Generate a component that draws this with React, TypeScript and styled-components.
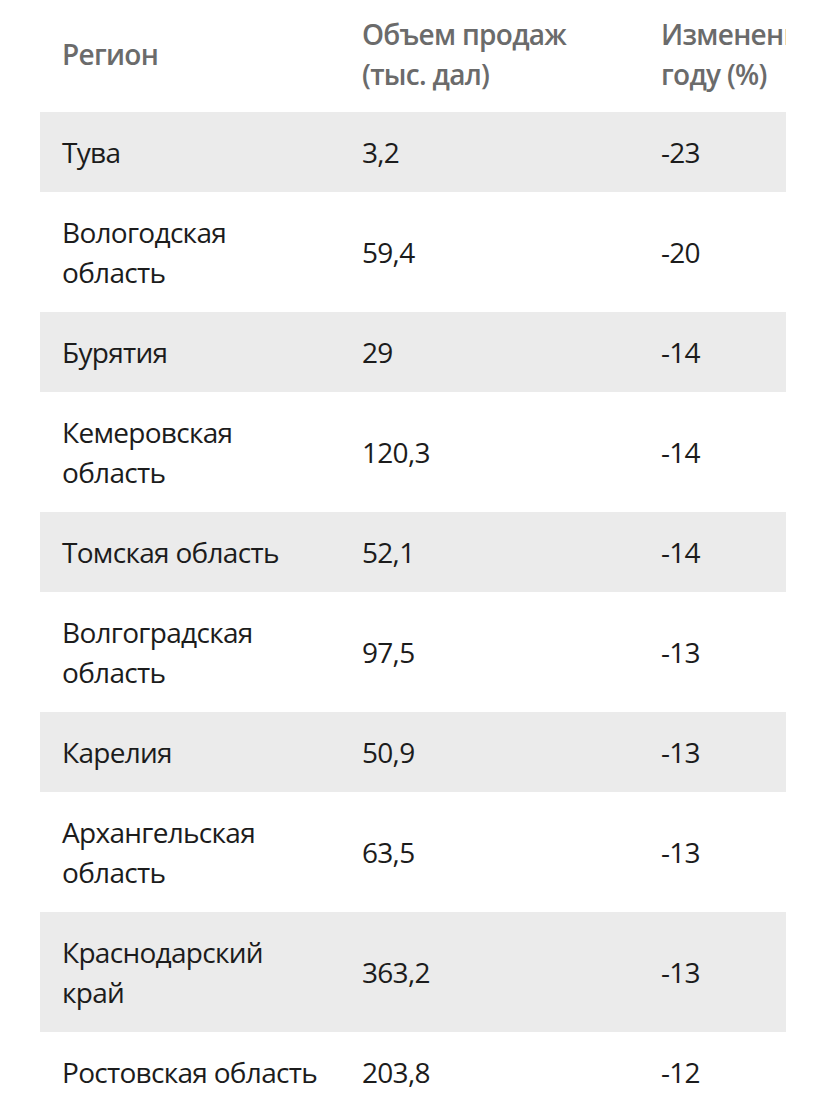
import React from 'react'
import styled, { createGlobalStyle } from 'styled-components'

const GlobalStyle = createGlobalStyle`
    body {
        margin: 0;
        background: #ffffff;
        font-family: 'Open Sans', 'Noto Sans', sans-serif;
    }
`

const Scroller = styled.div`
    width: 746px;
    margin-left: 40px;
    overflow: hidden;
`

const Table = styled.table`
    border-collapse: collapse;
    table-layout: fixed;
    width: 980px;
    font-size: 28px;
    line-height: 40px;
    letter-spacing: -0.7px;
`

const HeadCell = styled.th<{ $w: number }>`
    width: ${(p) => p.$w}px;
    padding: 14px 18px 18px 22px;
    text-align: left;
    vertical-align: middle;
    font-weight: 600;
    color: #6b6b6b;
`

const Row = styled.tr<{ $striped: boolean }>`
    background: ${(p) => (p.$striped ? '#ebebeb' : 'transparent')};
`

const Cell = styled.td`
    padding: 20px 18px 20px 22px;
    vertical-align: middle;
    color: #1c1c1c;
`

const rows = [
    ['Тува', '3,2', '-23'],
    ['Вологодская область', '59,4', '-20'],
    ['Бурятия', '29', '-14'],
    ['Кемеровская область', '120,3', '-14'],
    ['Томская область', '52,1', '-14'],
    ['Волгоградская область', '97,5', '-13'],
    ['Карелия', '50,9', '-13'],
    ['Архангельская область', '63,5', '-13'],
    ['Краснодарский край', '363,2', '-13'],
    ['Ростовская область', '203,8', '-12'],
]

export default function App() {
    return (
        <>
            <GlobalStyle />
            <Scroller>
                <Table>
                    <thead>
                        <tr>
                            <HeadCell $w={260}>Регион</HeadCell>
                            <HeadCell $w={259}>Объем продаж (тыс. дал)</HeadCell>
                            <HeadCell $w={341}>Изменение к прошлому году (%)</HeadCell>
                        </tr>
                    </thead>
                    <tbody>
                        {rows.map((r, i) => (
                            <Row key={r[0]} $striped={i % 2 === 0}>
                                <Cell>{r[0]}</Cell>
                                <Cell>{r[1]}</Cell>
                                <Cell>{r[2]}</Cell>
                            </Row>
                        ))}
                    </tbody>
                </Table>
            </Scroller>
        </>
    )
}
